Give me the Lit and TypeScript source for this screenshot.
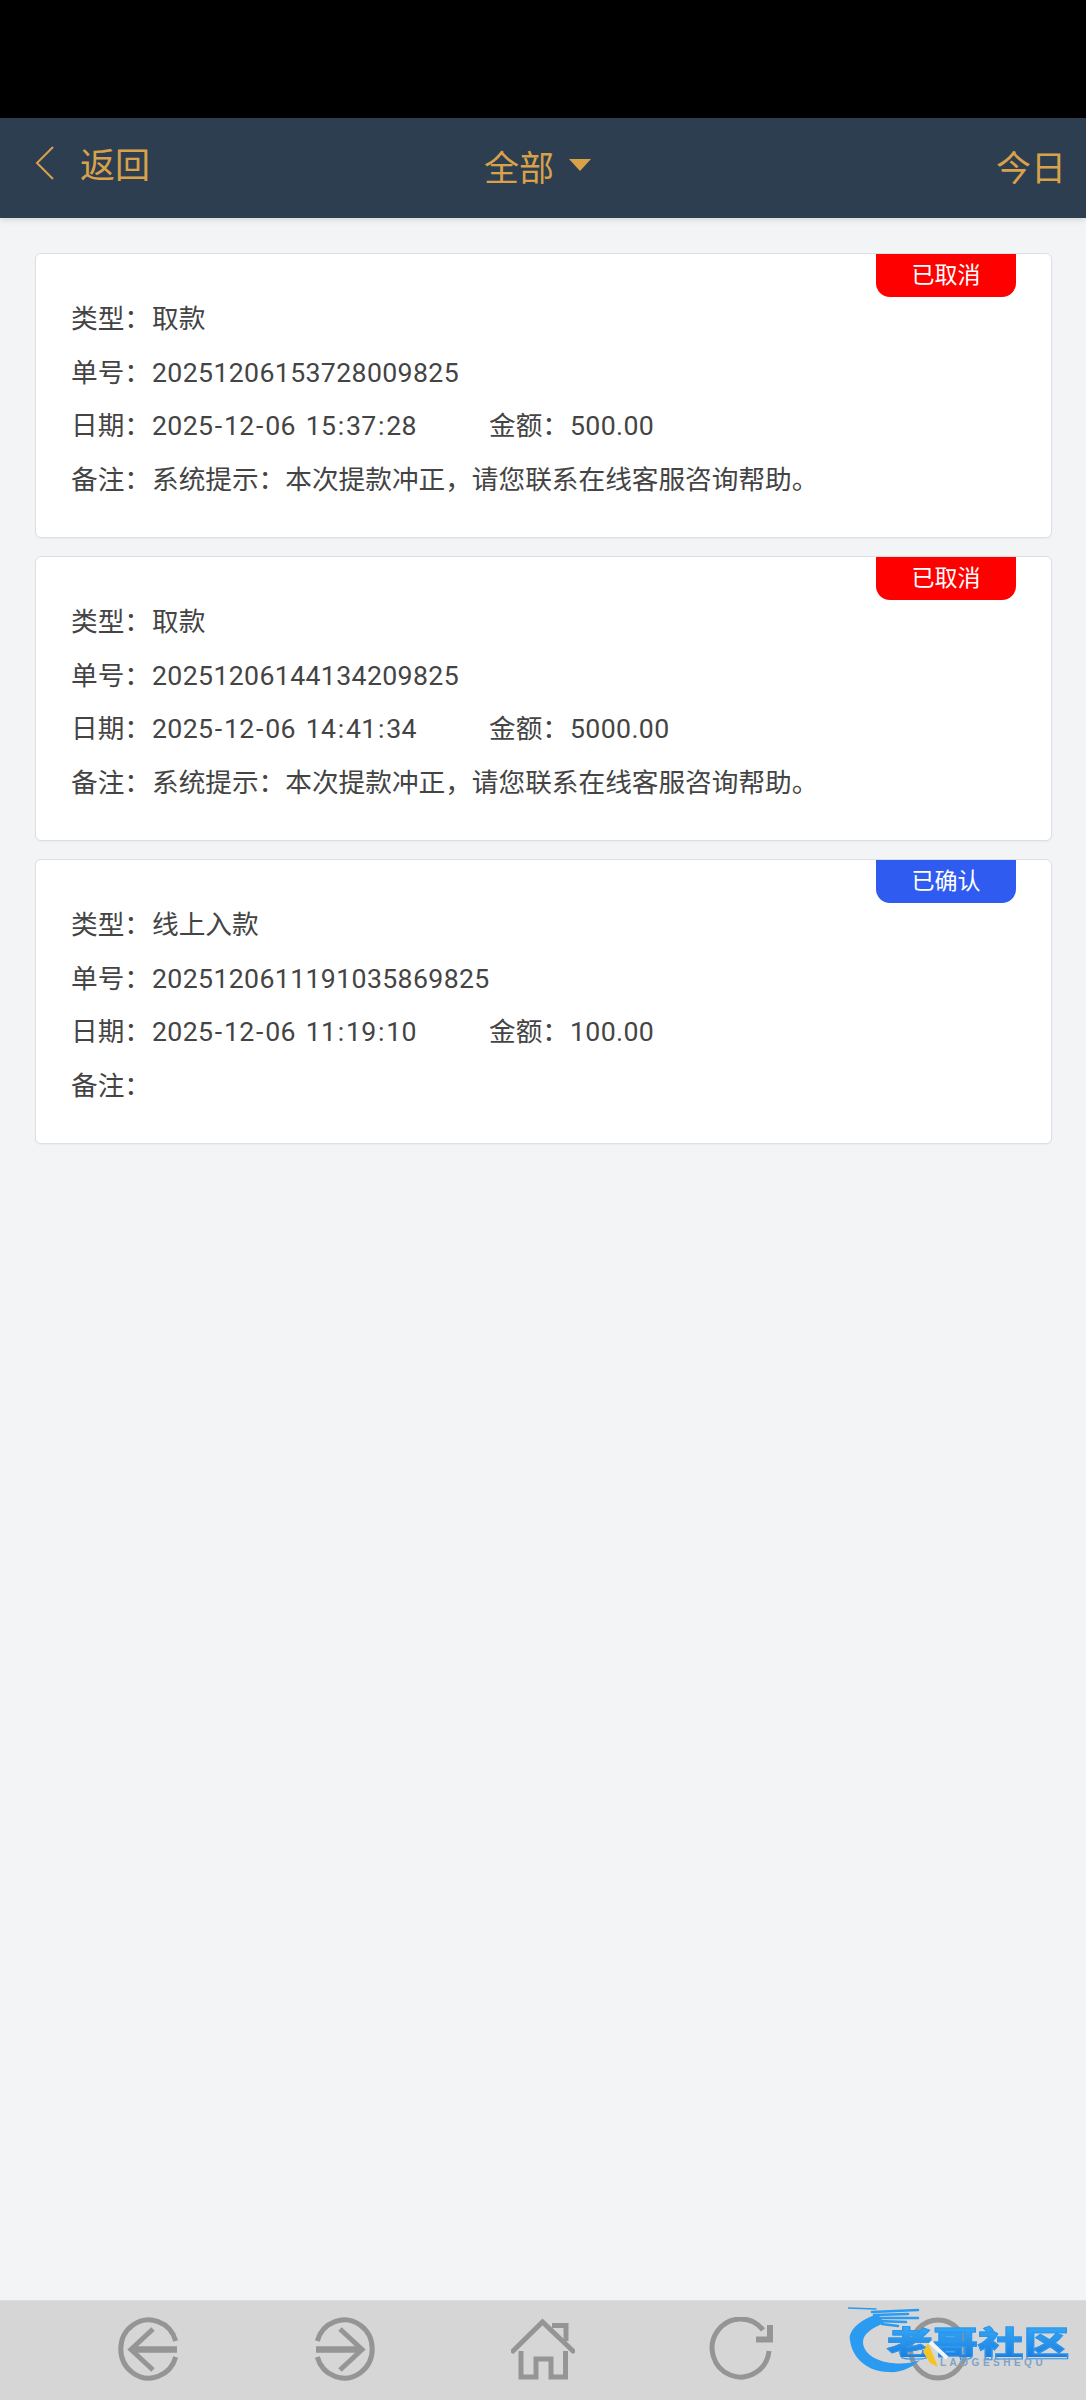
import { LitElement, html, css, svg } from "lit";
import { customElement } from "lit/decorators.js";

interface Rec { status: string; kind: "cancel" | "ok"; type: string; no: string; date: string; amount: string; note: string }

const RECORDS: Rec[] = [
  { status: "已取消", kind: "cancel", type: "取款", no: "20251206153728009825", date: "2025-12-06 15:37:28", amount: "500.00", note: "系统提示：本次提款冲正，请您联系在线客服咨询帮助。" },
  { status: "已取消", kind: "cancel", type: "取款", no: "20251206144134209825", date: "2025-12-06 14:41:34", amount: "5000.00", note: "系统提示：本次提款冲正，请您联系在线客服咨询帮助。" },
  { status: "已确认", kind: "ok", type: "线上入款", no: "2025120611191035869825", date: "2025-12-06 11:19:10", amount: "100.00", note: "" },
];

const ICONS = [
  svg`<path d="M59.700 24A28 29 0 1 0 59.700 40"/><path d="M37 12L15 32.500 37 53"/><path d="M15 32.500H61" stroke-width="6.500"/>`,
  svg`<path d="M4.300 24A28 29 0 1 1 4.300 40"/><path d="M27 12L49 32.500 27 53"/><path d="M3 32.500H49" stroke-width="6.500"/>`,
  svg`<path d="M2 34L31.500 5 62 34" stroke-linecap="round"/><path d="M41 8.500H55V24"/><path d="M10 34V60H25V42H40V60H54.500V34"/>`,
  svg`<path d="M60 34A28.500 29 0 1 1 54 13"/><path d="M47 22.500H61V8" stroke-width="6"/>`,
  svg`<ellipse cx="32" cy="32" rx="27.500" ry="29"/>`,
];

@customElement("app-root")
export class AppRoot extends LitElement {
  static styles = css`
    :host {
      display: flex;
      flex-direction: column;
      height: 2400px;
      background: #f2f4f6;
      font-family: "Roboto", "Noto Sans CJK SC", sans-serif;
      position: relative;
      overflow: hidden;
    }
    .status { height: 118px; background: #000; flex: none; }
    .header {
      flex: none;
      height: 100px;
      box-sizing: border-box;
      background: #2d3e50;
      color: #d9a24a;
      font-size: 35px;
      display: grid;
      grid-template-columns: 449px auto 1fr;
      align-items: center;
      padding: 0 20px 5px 35px;
      box-shadow: 0 2px 6px rgba(0, 0, 0, 0.12);
      position: relative;
    }
    .back { display: flex; align-items: center; gap: 25px; margin-bottom: 6px; }
    .back svg { width: 20px; height: 34px; fill: none; stroke: #d9a24a; stroke-width: 2; }
    .title { display: flex; align-items: center; gap: 15px; }
    .title i { width: 0; height: 0; border-left: 11px solid transparent; border-right: 11px solid transparent; border-top: 12px solid #d9a24a; margin-top: -2px; }
    .today { justify-self: end; }
    .list { flex: 1; padding: 35px 34px 0 35px; display: flex; flex-direction: column; gap: 18px; }
    .card {
      position: relative;
      height: 285px;
      box-sizing: border-box;
      background: #fff;
      border: 1px solid #dcdfe3;
      border-radius: 6px;
      padding: 39px 35px 0;
      color: #444;
      font-size: 26.670px;
      box-shadow: 0 1px 2px rgba(0, 0, 0, 0.04);
    }
    .row { height: 53.500px; line-height: 53.500px; white-space: nowrap; display: flex; }
    .label { width: 81px; flex: none; }
    .num { letter-spacing: 0.370px; }
    .date { width: 337px; flex: none; }
    .sep { margin: 0 1.400px; }
    .badge {
      position: absolute;
      top: 0;
      right: 35px;
      width: 140px;
      height: 43px;
      border-radius: 0 0 14px 14px;
      color: #fff;
      font-size: 23px;
      line-height: 44px;
      text-align: center;
    }
    .cancel { background: #fe0000; }
    .ok { background: #2f5bf0; }
    .bar {
      flex: none;
      height: 100px;
      box-sizing: border-box;
      background: #d6d6d6;
      border-top: 1px solid #dddddd;
      padding: 0 49px;
      display: grid;
      grid-template-columns: repeat(5, 1fr);
      align-items: center;
      justify-items: center;
    }
    .bar svg { width: 64px; height: 64px; fill: none; stroke: #959595; stroke-width: 5; margin-top: -4px; }
    .logo { position: absolute; left: 848px; top: 2304px; width: 222px; height: 72px; }
    .logo svg { position: absolute; left: 0; top: 0; width: 222px; height: 72px; }
    .logo b {
      position: absolute;
      left: 39px;
      top: 23px;
      font: 900 34px/30px "Noto Sans CJK SC", sans-serif;
      color: #2a96ee;
      background: linear-gradient(#35a6f4, #1c7fe0);
      -webkit-background-clip: text;
      background-clip: text;
      -webkit-text-fill-color: transparent;
      -webkit-text-stroke: 1px #2a96ee;
      white-space: nowrap;
      transform-origin: left top;
      transform: scaleX(1.340);
    }
    .logo span {
      position: absolute;
      left: 92px;
      top: 54px;
      font: 700 10px/10px "Liberation Sans", sans-serif;
      letter-spacing: 3.500px;
      color: #7fa3c4;
      white-space: nowrap;
    }
  `;

  private date(value: string) {
    return value.split(/([-: ])/).map((part, i) => (i % 2 ? html`<span class="sep">${part === " " ? "\u00a0" : part}</span>` : part));
  }

  private card(r: Rec) {
    return html`<div class="card">
      <div class="badge ${r.kind}">${r.status}</div>
      <div class="row"><span class="label">类型：</span><span>${r.type}</span></div>
      <div class="row"><span class="label">单号：</span><span class="num">${r.no}</span></div>
      <div class="row">
        <span class="label">日期：</span><span class="date num">${this.date(r.date)}</span>
        <span class="label">金额：</span><span class="num">${r.amount}</span>
      </div>
      <div class="row"><span class="label">备注：</span><span>${r.note}</span></div>
    </div>`;
  }

  render() {
    return html`
      <div class="status"></div>
      <header class="header">
        <div class="back">
          <svg viewBox="0 0 20 34"><path d="M18 1L2 17l16 16" /></svg>
          <span>返回</span>
        </div>
        <div class="title"><span>全部</span><i></i></div>
        <div class="today">今日</div>
      </header>
      <main class="list">${RECORDS.map((r) => this.card(r))}</main>
      <nav class="bar">${ICONS.map((i) => html`<svg viewBox="0 0 64 64">${i}</svg>`)}</nav>
      <div class="logo">
        <b>老哥社区</b>
        <span>LAOGESHEQU</span>
        <svg viewBox="0 0 222 72">
          <path d="M30 10C10 16 0 28 2 36 4 54 20 68 40 68 52 69 64 64 72 56 62 60 52 60 44 59 30 58 15 50 15 38 15 30 24 24 36 19z" fill="#2a9bf0" />
          <g stroke="#2a9bf0" stroke-width="2.500" fill="none" stroke-linecap="round">
            <path d="M0 4L28 5" stroke-width="1.500" />
            <path d="M24 8L70 6" />
            <path d="M26 11L60 10" />
            <path d="M28 14L70 14" />
            <path d="M30 17L58 18" />
            <path d="M34 20L50 22" />
          </g>
          <path d="M75 48l5-9 10 24-8-4z" fill="#f5c526" />
          <path d="M82 38l17 16" stroke="#f4f4f4" stroke-width="4" fill="none" />
        </svg>
      </div>
    `;
  }
}
